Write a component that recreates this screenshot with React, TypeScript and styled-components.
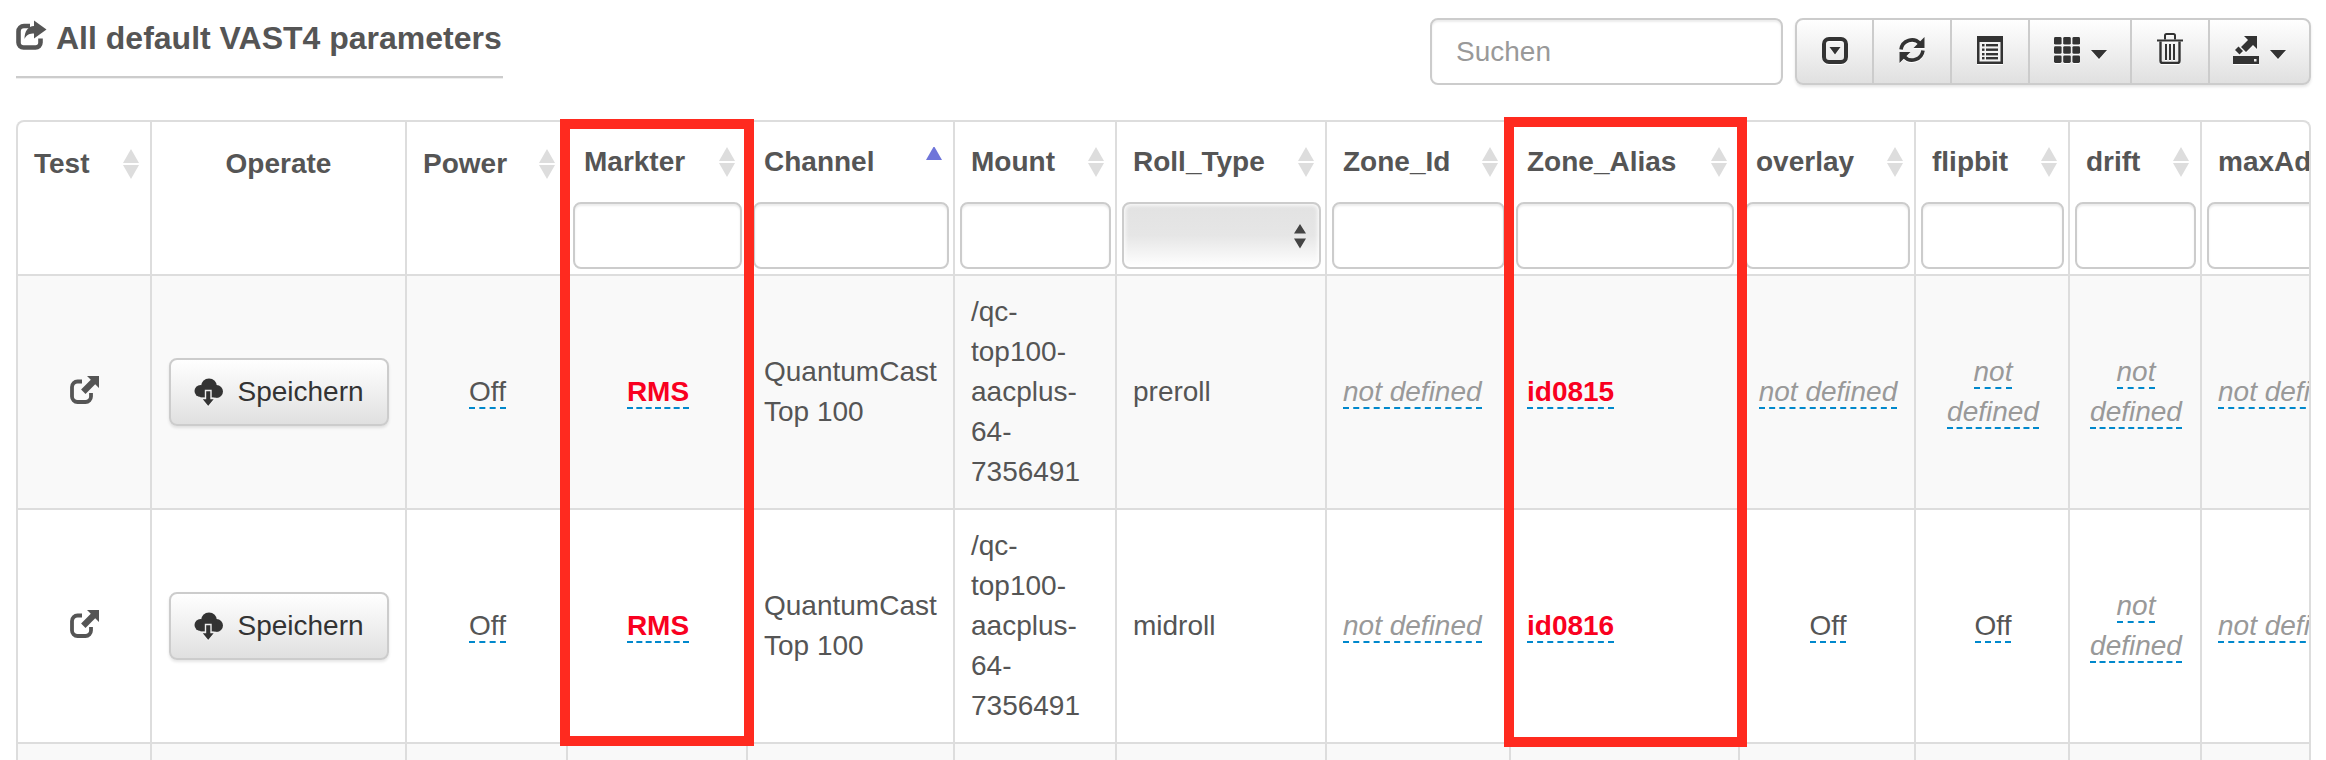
import React from "react";
import styled, { createGlobalStyle } from "styled-components";

const Global = createGlobalStyle`
  html, body { margin: 0; padding: 0; background: #fff; height: 760px; overflow: hidden; }
  body { font-family: "Liberation Sans", Arial, sans-serif; font-size: 28px; line-height: 40px; color: #555; }
  * { box-sizing: border-box; }
`;

const Page = styled.div`
  position: relative;
  width: 2326px;
  height: 760px;
  padding: 0 15px 0 16px;
  overflow: hidden;
`;

const TopBar = styled.header`
  display: flex;
  justify-content: space-between;
  align-items: flex-start;
  height: 120px;
`;

const Title = styled.h1`
  display: flex;
  align-items: flex-start;
  gap: 9px;
  width: 487px;
  height: 78px;
  margin: 0;
  padding: 20px 0 0 0;
  font-size: 32px;
  line-height: 36px;
  font-weight: 700;
  color: #555;
  border-bottom: 2px solid #ccc;
  box-shadow: 0 1px 0 #eee;
`;

const Tools = styled.div`
  display: flex;
  gap: 12px;
  padding-top: 18px;
`;

const Search = styled.input`
  width: 353px;
  height: 67px;
  padding: 0 24px;
  font: 28px "Liberation Sans", Arial, sans-serif;
  color: #555;
  border: 2px solid #ccc;
  border-radius: 8px;
  box-shadow: inset 0 2px 2px rgba(0, 0, 0, 0.075);
  outline: none;
  &::placeholder { color: #999; opacity: 1; }
`;

const BtnGroup = styled.div`
  display: flex;
  height: 67px;
  width: 516px;
  border: 2px solid #ccc;
  border-radius: 8px;
  overflow: hidden;
  background: linear-gradient(#fff, #e0e0e0);
  box-shadow: 0 2px 3px rgba(0, 0, 0, 0.1);
`;

const ToolBtn = styled.button<{ $w: number; $lift?: number }>`
  display: flex;
  flex: none;
  align-items: center;
  justify-content: center;
  gap: 11px;
  width: ${(p) => p.$w}px;
  padding: 0 0 ${(p) => p.$lift ?? 3}px;
  background: transparent;
  border: 0;
  border-right: 2px solid #ccc;
  &:last-child { border-right: 0; }
  svg { display: block; filter: drop-shadow(0 1px 0 #fff); fill: #333; color: #333; }
`;

const TableWrap = styled.div`
  width: 2295px;
  height: 700px;
  margin-left: 0;
  border: 2px solid #ddd;
  border-bottom: 0;
  border-radius: 8px 8px 0 0;
  overflow: hidden;
`;

const Table = styled.table`
  table-layout: fixed;
  border-collapse: separate;
  border-spacing: 0;
  width: 2384px;
`;

const Col = styled.col<{ $w: number }>`
  width: ${(p) => p.$w}px;
`;

const Th = styled.th`
  height: 154px;
  padding: 0;
  vertical-align: top;
  text-align: left;
  font-weight: 700;
  color: #555;
  border-right: 2px solid #ddd;
  border-bottom: 2px solid #ddd;
`;

const HeadRow = styled.div<{ $plain?: boolean; $center?: boolean }>`
  display: flex;
  align-items: center;
  justify-content: ${(p) => (p.$center ? "center" : "space-between")};
  height: 40px;
  margin-top: ${(p) => (p.$plain ? 22 : 20)}px;
  padding: 0 11px 0 16px;
  ${(p) => (p.$center ? "padding: 0;" : "")}
  white-space: nowrap;
  overflow: hidden;
`;

const FilterBox = styled.div`
  height: 67px;
  margin-top: 20px;
  padding: 0 4px 0 5px;
`;

const FilterInput = styled.input`
  display: block;
  width: 100%;
  height: 67px;
  border: 2px solid #ccc;
  border-radius: 8px;
  background: #fff;
  box-shadow: inset 0 2px 2px rgba(0, 0, 0, 0.075);
  outline: none;
`;

const SelectWrap = styled.div`
  position: relative;
  height: 67px;
`;

const FilterSelect = styled.select`
  display: block;
  width: 100%;
  height: 67px;
  appearance: none;
  border: 2px solid #ccc;
  border-radius: 8px;
  background: linear-gradient(#e2e2e2 0%, #e6e6e6 50%, #fff 100%);
  box-shadow: inset 0 0 4px 1px #fff;
  outline: none;
`;

const SelectArrows = styled.svg`
  position: absolute;
  right: 15px;
  top: 22px;
  fill: #444;
  pointer-events: none;
`;

const Row = styled.tr<{ $odd?: boolean }>`
  background: ${(p) => (p.$odd ? "#f9f9f9" : "#fff")};
`;

const Td = styled.td<{ $center?: boolean }>`
  height: 234px;
  padding: ${(p) => (p.$center ? "16px 15px 16px 17px" : "16px")};
  vertical-align: middle;
  text-align: ${(p) => (p.$center ? "center" : "left")};
  border-right: 2px solid #ddd;
  border-bottom: 2px solid #ddd;
`;

const Editable = styled.a<{ $kind?: "red" | "empty" }>`
  border-bottom: 2px dashed #0088cc;
  ${(p) => (p.$kind === "red" ? "color: #f90020; font-weight: 700;" : "")}
  ${(p) => (p.$kind === "empty" ? "color: #999; font-style: italic;" : "")}
`;

const Nowrap = styled.span`
  white-space: nowrap;
`;

const TestIcon = styled.svg`
  display: block;
  margin: -5px auto 0;
  fill: #555;
`;

const SaveBtn = styled.button`
  display: flex;
  align-items: center;
  gap: 15px;
  width: 220px;
  height: 68px;
  margin: 0 auto;
  padding: 0 0 0 23px;
  font: 28px "Liberation Sans", Arial, sans-serif;
  color: #333;
  background: linear-gradient(#fff, #e0e0e0);
  border: 2px solid #ccc;
  border-radius: 8px;
  box-shadow: 0 2px 3px rgba(0, 0, 0, 0.1);
`;

const RedBox = styled.div<{ $l: number; $t: number; $w: number; $h: number }>`
  position: absolute;
  left: ${(p) => p.$l}px;
  top: ${(p) => p.$t}px;
  width: ${(p) => p.$w}px;
  height: ${(p) => p.$h}px;
  border: 10px solid #ff2a1f;
  pointer-events: none;
`;

const ShareIcon = () => (
  <svg width="31" height="30" viewBox="0 0 31 30" fill="#555" style={{ flex: "none" }}>
    <path d="M14 6H8A5.500 5.500 0 0 0 2.500 11.500V22.500A5 5 0 0 0 7.500 27.500h12a5 5 0 0 0 5-5v-4" fill="none" stroke="#555" strokeWidth="4.600" />
    <path d="M18 0.500l12.500 9L18 18.500v-5c-4 0-7.500 1-9.500 5.500 0-7.500 3.500-13 9.500-13z" />
  </svg>
);

const CaretSquare = () => (
  <svg width="26" height="27" viewBox="0 0 26 27">
    <rect x="2" y="2" width="22" height="23" rx="5" fill="none" stroke="#333" strokeWidth="4" />
    <path d="M7.500 10h11L13 17.500z" />
  </svg>
);

const Refresh = () => (
  <svg width="28" height="28" viewBox="0 0 28 28">
    <path d="M3 13.500A11 11 0 0 1 22 7.500" fill="none" stroke="#333" strokeWidth="3.600" />
    <path d="M26.500 1v11h-11z" />
    <path d="M25 14.500A11 11 0 0 1 6 20.500" fill="none" stroke="#333" strokeWidth="3.600" />
    <path d="M1.500 27V16h11z" />
  </svg>
);

const ListAlt = () => (
  <svg width="26" height="28" viewBox="0 0 26 28">
    <rect width="26" height="28" fill="#333" />
    <rect x="2.500" y="6" width="21" height="19.500" fill="#f2f2f2" />
    {[8, 12.5, 17, 21].map((y) => (
      <g key={y}>
        <rect x="5" y={y} width="2.500" height="2.400" fill="#333" />
        <rect x="9" y={y} width="12" height="2.400" fill="#333" />
      </g>
    ))}
  </svg>
);

const Grid = () => (
  <svg width="26" height="26" viewBox="0 0 26 26">
    {[0, 9.2, 18.4].map((y) =>
      [0, 9.2, 18.4].map((x) => <rect key={`${x}-${y}`} x={x} y={y} width="7.600" height="7.600" rx="1.400" />)
    )}
  </svg>
);

const Trash = () => (
  <svg width="26" height="31" viewBox="0 0 26 31">
    <path d="M0 6.500h26v2H0z" />
    <path d="M8 6.500V2.500A1.500 1.500 0 0 1 9.500 1h7A1.500 1.500 0 0 1 18 2.500v4" fill="none" stroke="#333" strokeWidth="2" />
    <path d="M3.500 8.500V28a2 2 0 0 0 2 2h15a2 2 0 0 0 2-2V8.500" fill="none" stroke="#333" strokeWidth="2.400" />
    <path d="M8 11h2v16H8zM12 11h2v16h-2zM16 11h2v16h-2z" />
  </svg>
);

const ExportIcon = () => (
  <svg width="26" height="28" viewBox="0 0 26 28">
    <path d="M11 0h13v13l-4-4-7 7-5-5 7-7z" />
    <path d="M5.500 10.500l4.500 4.500-3.500 3.500L2 14z" />
    <path d="M0 20h26v8H0z" />
    <rect x="21" y="23" width="2.500" height="2.500" fill="#eee" />
  </svg>
);

const Caret = () => (
  <svg width="16" height="9" viewBox="0 0 16 9" style={{ marginTop: 9 }}>
    <path d="M0 0h16L8 9z" />
  </svg>
);

const Sort = ({ active }: { active?: boolean }) => (
  <svg width="16" height="30" viewBox="0 0 16 30" style={{ flex: "none" }}>
    {active ? (
      <path d="M8 0l8 14H0z" fill="#6f75d9" transform="translate(0 -1)" />
    ) : (
      <>
        <path d="M8 0l8 14H0z" fill="#ddd" />
        <path d="M0 16h16l-8 14z" fill="#ddd" />
      </>
    )}
  </svg>
);

const OpenIcon = () => (
  <TestIcon width="29" height="28" viewBox="0 0 29 28">
    <path d="M12 5.500H7.500A5.500 5.500 0 0 0 2 11v9.500A5.500 5.500 0 0 0 7.500 26h8a5.500 5.500 0 0 0 5.500-5.500V17" fill="none" stroke="#555" strokeWidth="3.800" />
    <path d="M17 0h12v12l-3.800-3.800-9.700 9.700-4.400-4.400 9.700-9.700z" />
  </TestIcon>
);

const CloudIcon = () => (
  <svg width="29" height="29" viewBox="0 0 29 29" style={{ flex: "none" }}>
    <circle cx="15" cy="8.500" r="8" fill="#333" />
    <circle cx="6.500" cy="13" r="6" fill="#333" />
    <circle cx="22.500" cy="13.500" r="6.500" fill="#333" />
    <rect x="6.500" y="10" width="16" height="9.500" fill="#333" />
    <path d="M11.500 12.500h5.500v8h4.200L14.200 29l-7-8.500h4.300z" fill="#333" stroke="#efefef" strokeWidth="1.400" />
  </svg>
);

const widths = [134, 255, 161, 180, 207, 162, 210, 184, 229, 176, 154, 132, 200];

const heads: { label: string; plain?: boolean; center?: boolean; active?: boolean; filter?: "input" | "select" | "none" }[] = [
  { label: "Test", plain: true, filter: "none" },
  { label: "Operate", plain: true, center: true, filter: "none" },
  { label: "Power", plain: true, filter: "none" },
  { label: "Markter" },
  { label: "Channel", active: true },
  { label: "Mount" },
  { label: "Roll_Type", filter: "select" },
  { label: "Zone_Id" },
  { label: "Zone_Alias" },
  { label: "overlay" },
  { label: "flipbit" },
  { label: "drift" },
  { label: "maxAdvertisers" },
];

const MOUNT = "/qc-top100-aacplus-64-7356491";

const rows = [
  { roll: "preroll", alias: "id0815", overlay: "", flip: "" },
  { roll: "midroll", alias: "id0816", overlay: "Off", flip: "Off" },
];

const Maybe = ({ value }: { value: string }) =>
  value ? <Editable>{value}</Editable> : <Editable $kind="empty">not defined</Editable>;

export default function App() {
  return (
    <Page>
      <Global />
      <TopBar>
        <Title>
          <ShareIcon />
          All default VAST4 parameters
        </Title>
        <Tools>
          <Search placeholder="Suchen" />
          <BtnGroup>
            <ToolBtn $w={77}><CaretSquare /></ToolBtn>
            <ToolBtn $w={78}><Refresh /></ToolBtn>
            <ToolBtn $w={78}><ListAlt /></ToolBtn>
            <ToolBtn $w={102}><Grid /><Caret /></ToolBtn>
            <ToolBtn $w={78} $lift={6}><Trash /></ToolBtn>
            <ToolBtn $w={99}><ExportIcon /><Caret /></ToolBtn>
          </BtnGroup>
        </Tools>
      </TopBar>

      <TableWrap>
        <Table>
          <colgroup>
            {widths.map((w, i) => <Col key={i} $w={w} />)}
          </colgroup>
          <thead>
            <tr>
              {heads.map((h) => (
                <Th key={h.label}>
                  <HeadRow $plain={h.plain} $center={h.center}>
                    {h.label}
                    {!h.center && <Sort active={h.active} />}
                  </HeadRow>
                  {h.filter !== "none" && (
                    <FilterBox>
                      {h.filter === "select" ? (
                        <SelectWrap>
                          <FilterSelect />
                          <SelectArrows width="12" height="25" viewBox="0 0 12 25">
                            <path d="M6 0l6 9.500H0zM0 14.500h12L6 24.500z" />
                          </SelectArrows>
                        </SelectWrap>
                      ) : (
                        <FilterInput />
                      )}
                    </FilterBox>
                  )}
                </Th>
              ))}
            </tr>
          </thead>
          <tbody>
            {rows.map((r, i) => (
              <Row key={r.alias} $odd={i === 0}>
                <Td><OpenIcon /></Td>
                <Td><SaveBtn><CloudIcon />Speichern</SaveBtn></Td>
                <Td $center><Editable>Off</Editable></Td>
                <Td $center><Editable $kind="red">RMS</Editable></Td>
                <Td>QuantumCast Top 100</Td>
                <Td>{MOUNT}</Td>
                <Td>{r.roll}</Td>
                <Td><Editable $kind="empty">not defined</Editable></Td>
                <Td><Editable $kind="red">{r.alias}</Editable></Td>
                <Td $center><Maybe value={r.overlay} /></Td>
                <Td $center><Maybe value={r.flip} /></Td>
                <Td $center><Editable $kind="empty">not defined</Editable></Td>
                <Td><Nowrap><Editable $kind="empty">not defined</Editable></Nowrap></Td>
              </Row>
            ))}
            <Row $odd>
              {widths.map((_, i) => <Td key={i} />)}
            </Row>
          </tbody>
        </Table>
      </TableWrap>

      <RedBox $l={560} $t={119} $w={194} $h={627} />
      <RedBox $l={1504} $t={117} $w={243} $h={630} />
    </Page>
  );
}
